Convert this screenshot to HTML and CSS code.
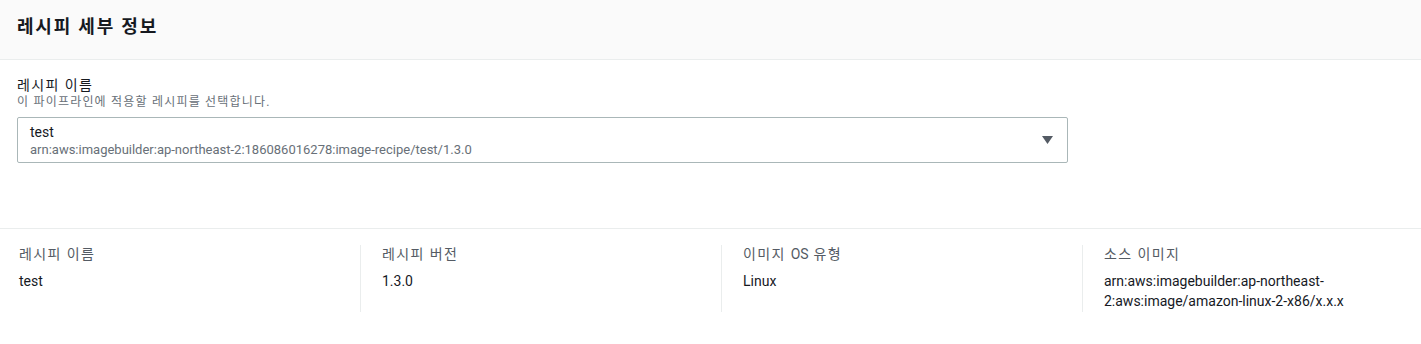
FILE: index.html
```html
<!DOCTYPE html>
<html lang="ko">

<head>
  <meta charset="UTF-8">
  <title>레시피 세부 정보</title>

  <link rel="stylesheet" href="styles.css">
</head>

<body>
  <div class="panel">
    <div class="panel-header">
      <h2 class="ko">레시피 세부 정보</h2>
    </div>

    <div class="panel-body">
      <div class="field">
        <label class="field-label ko">레시피 이름</label>
        <p class="field-desc ko">이 파이프라인에 적용할 레시피를 선택합니다.</p>
        <div class="select">
          <div class="select-text">
            <span class="select-value">test</span>
            <span class="select-sub">arn:aws:imagebuilder:ap-northeast-2:186086016278:image-recipe/test/1.3.0</span>
          </div>
          <svg class="caret" width="11" height="8" viewBox="0 0 11 8">
            <path d="M0 0H11L5.5 8Z" fill="#545b64" />
          </svg>
        </div>
      </div>
    </div>

    <!-- 선택된 레시피 요약 -->
    <div class="details">
      <div class="col">
        <div class="col-label ko">레시피 이름</div>
        <div class="col-value">test</div>
      </div>
      <div class="col">
        <div class="col-label ko">레시피 버전</div>
        <div class="col-value">1.3.0</div>
      </div>
      <div class="col">
        <div class="col-label ko">이미지 <span class="latin">OS</span> 유형</div>
        <div class="col-value">Linux</div>
      </div>
      <div class="col">
        <div class="col-label ko">소스 이미지</div>
        <div class="col-value">arn:aws:imagebuilder:ap-northeast-2:aws:image/amazon-linux-2-x86/x.x.x</div>
      </div>
    </div>
  </div>
</body>

</html>
```

FILE: styles.css
```css
html {
  font-family: Roboto, "Noto Sans CJK KR", sans-serif;
  background: white;
  color: #16191f;
}

body {
  margin: 0;
}

.ko {
  letter-spacing: 0.1em;
}

.ko .latin {
  letter-spacing: 0;
}

.panel-header {
  background: #fafafa;
  border-bottom: 1px solid #eaeded;
  padding: 16px 17px 21px;
}

.panel-header h2 {
  margin: 0;
  font-size: 18px;
  line-height: 22px;
  font-weight: 700;
}

.panel-body {
  padding: 16px 17px 65px;
}

.field-label {
  display: block;
  font-size: 14px;
  line-height: 18px;
}

.field-desc {
  margin: 0 0 7px;
  font-size: 12px;
  line-height: 16px;
  color: #687078;
}

.select {
  display: flex;
  align-items: center;
  max-width: 1051px;
  box-sizing: border-box;
  padding: 4px 14px 4px 12px;
  border: 1px solid #aab7b8;
  border-radius: 2px;
}

.select-text {
  flex: 1;
  display: flex;
  flex-direction: column;
}

.select-value {
  font-size: 14px;
  line-height: 20px;
}

.select-sub {
  font-size: 13px;
  line-height: 16px;
  color: #687078;
}

.caret {
  display: block;
}

.details {
  display: grid;
  grid-template-columns: 360px 361px 361px 1fr;
  border-top: 1px solid #eaeded;
  padding-top: 16px;
}

.col {
  padding: 0 20px 1px 21px;
  font-size: 14px;
}

.col:first-child {
  padding-left: 19px;
}

.col + .col {
  border-left: 1px solid #eaeded;
}

.col-label {
  line-height: 18px;
  color: #545b64;
  margin-bottom: 8px;
}

.col-value {
  line-height: 20px;
}
```
